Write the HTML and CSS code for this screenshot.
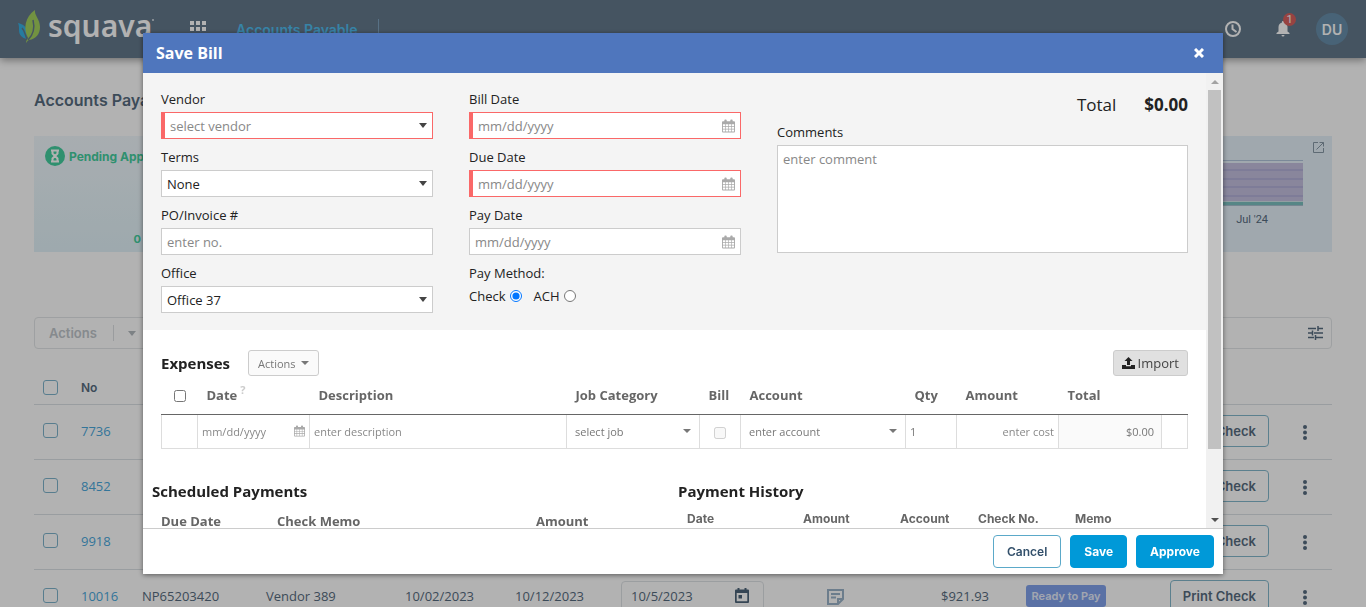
FILE: index.html
```html
<!doctype html>
<html lang="en">
    <head>
        <meta charset="UTF-8" />
        <meta name="viewport" content="width=device-width, initial-scale=1.0" />
        <title>Squava - Accounts Payable</title>
        <link rel="stylesheet" href="styles.css">
    </head>
    <body>
        <svg class="symbols" aria-hidden="true">
            <symbol id="icon-calendar" viewBox="0 0 14 14">
                <path fill-rule="evenodd" d="M1 2h1.500V1a1 1 0 0 1 1-1h.6a1 1 0 0 1 1 1v1h3.800V1a1 1 0 0 1 1-1h.6a1 1 0 0 1 1 1v1H13a1 1 0 0 1 1 1v10a1 1 0 0 1-1 1H1a1 1 0 0 1-1-1V3a1 1 0 0 1 1-1zM1 5v2h2.300V5zm3 0v2h2.700V5zm3.400 0v2H10V5zm3.300 0v2H13V5zM1 7.700v2.300h2.300V7.700zm3 0v2.300h2.700V7.700zm3.400 0v2.300H10V7.700zm3.300 0v2.300H13V7.700zM1 10.700V13h2.300v-2.300zm3 0V13h2.700v-2.300zm3.400 0V13H10v-2.300zm3.300 0V13H13v-2.300z"/>
            </symbol>
            <symbol id="icon-dots" viewBox="0 0 4 15">
                <circle cx="2" cy="2" r="2"/><circle cx="2" cy="7.500" r="2"/><circle cx="2" cy="13" r="2"/>
            </symbol>
        </svg>

        <header class="topbar">
            <a class="logo" href="#">
                <svg width="22" height="33" viewBox="0 0 22 33" aria-hidden="true">
                    <path fill="#37b0e4" d="M0 13c5 1 9 4 9 9 0 3-1 5 0 7-5-1-8-4-8-9 0-3 0-5-1-7z"/>
                    <path fill="#a4d25e" d="M17 0c-1 5 5 9 5 17 0 7-4 12-11 13-2 1-2 2-3 3 0-2 1-4 2-5-5-9-3-21 7-28z"/>
                    <path fill="none" stroke="#64798c" stroke-width="1.500" d="M10 30c5-5 7-12 5-20M4 18c3 3 3 7 5 11"/>
                </svg>
                <span class="logo-text">squava</span>
                <i class="logo-mark"></i>
            </a>
            <button class="icon-button apps" aria-label="Applications">
                <svg width="16" height="16" viewBox="0 0 16 16"><path fill="#fff" d="M0 0h4v4H0zM6 0h4v4H6zM12 0h4v4h-4zM0 6h4v4H0zM6 6h4v4H6zM12 6h4v4h-4zM0 12h4v4H0zM6 12h4v4H6zM12 12h4v4h-4z"/></svg>
            </button>
            <nav class="nav"><a href="#">Accounts Payable</a></nav>
            <div class="topbar-right">
                <button class="icon-button" aria-label="History">
                    <svg width="18" height="18" viewBox="0 0 18 18" fill="none" stroke="#fff" stroke-width="2"><circle cx="9" cy="9" r="7"/><path d="M8.500 4.500V9l4 3"/></svg>
                </button>
                <button class="icon-button bell" aria-label="Notifications">
                    <svg width="14" height="16" viewBox="0 0 14 16" fill="#fff"><path d="M7 0a1.200 1.200 0 0 1 1.200 1.200v.6A4.500 4.500 0 0 1 11.500 6v4.500L13.500 12v1H.5v-1l2-1.500V6a4.500 4.500 0 0 1 3.300-4.200v-.6A1.200 1.200 0 0 1 7 0zM5.500 14h3a1.500 1.500 0 0 1-3 0z"/></svg>
                    <span class="bell-count">1</span>
                </button>
                <button class="avatar">DU</button>
            </div>
        </header>

        <main class="page">
            <h1 class="page-title">Accounts Payable</h1>
            <div class="summary">
                <section class="card">
                    <div class="card-title">
                        <svg width="20" height="20" viewBox="0 0 20 20" aria-hidden="true"><circle cx="10" cy="10" r="10" fill="#44cf9f"/><path fill="none" stroke="#fff" stroke-width="2" d="M6 4.500h8M6 15.500h8M7.500 5v2.500L10 10l-2.500 2.500V15M12.500 5v2.500L10 10l2.500 2.500V15"/></svg>
                        Pending Approval
                    </div>
                    <div class="card-count">0</div>
                </section>
                <section class="card card-chart">
                    <button class="icon-button expand" aria-label="Expand chart">
                        <svg width="11" height="11" viewBox="0 0 11 11" fill="none" stroke="#8798a7"><path d="M5 .5H.5v10h10V6M6.500 .5h4v4M10.500 .5l-7 7"/></svg>
                    </button>
                    <div class="bars"></div>
                    <div class="chart-label">Jul '24</div>
                </section>
            </div>

            <div class="toolbar">
                <button class="toolbar-actions" disabled><span>Actions</span><i class="caret"></i></button>
                <button class="icon-button" aria-label="Filters">
                    <svg width="15" height="14" viewBox="0 0 15 14" stroke="#576c80" stroke-width="1.500"><path d="M0 2.500h8M10 2.500h5M10 0v5M0 7h4M6 7h9M4.500 4.500v5M0 11.500h6M8 11.500h7M7.500 9v5"/></svg>
                </button>
            </div>

            <table class="bills">
                <colgroup>
                    <col class="w-check"><col class="w-no"><col class="w-invoice"><col class="w-vendor"><col class="w-date"><col class="w-due"><col class="w-pay"><col class="w-note"><col class="w-amount"><col class="w-status"><col><col class="w-menu">
                </colgroup>
                <thead>
                    <tr><th><input type="checkbox" class="check" aria-label="Select all"></th><th colspan="11">No</th></tr>
                </thead>
                <tbody>
                    <tr>
                        <td><input type="checkbox" class="check" aria-label="Select 7736"></td>
                        <td><a href="#">7736</a></td>
                        <td colspan="8"></td>
                        <td class="right"><button class="print">Print Check</button></td>
                        <td class="center"><button class="icon-button" aria-label="More"><svg class="dots"><use href="#icon-dots"/></svg></button></td>
                    </tr>
                    <tr>
                        <td><input type="checkbox" class="check" aria-label="Select 8452"></td>
                        <td><a href="#">8452</a></td>
                        <td colspan="8"></td>
                        <td class="right"><button class="print">Print Check</button></td>
                        <td class="center"><button class="icon-button" aria-label="More"><svg class="dots"><use href="#icon-dots"/></svg></button></td>
                    </tr>
                    <tr>
                        <td><input type="checkbox" class="check" aria-label="Select 9918"></td>
                        <td><a href="#">9918</a></td>
                        <td colspan="8"></td>
                        <td class="right"><button class="print">Print Check</button></td>
                        <td class="center"><button class="icon-button" aria-label="More"><svg class="dots"><use href="#icon-dots"/></svg></button></td>
                    </tr>
                    <tr>
                        <td><input type="checkbox" class="check" aria-label="Select 10016"></td>
                        <td><a href="#">10016</a></td>
                        <td>NP65203420</td>
                        <td>Vendor 389</td>
                        <td>10/02/2023</td>
                        <td>10/12/2023</td>
                        <td>
                            <div class="pay-date">
                                <input type="text" value="10/5/2023" aria-label="Pay date">
                                <svg width="14" height="15" viewBox="0 0 14 15" fill="#4c6479"><path fill-rule="evenodd" d="M2.500 0h2v1.500h5V0h2v1.500H13a1 1 0 0 1 1 1V14a1 1 0 0 1-1 1H1a1 1 0 0 1-1-1V2.500a1 1 0 0 1 1-1h1.500zM1.700 5v8.300h10.600V5zM3.500 7h3.500v3.500H3.500z"/></svg>
                            </div>
                        </td>
                        <td class="center"><button class="icon-button" aria-label="Notes"><svg width="17" height="16" viewBox="0 0 17 16" fill="none" stroke="#9bb3c9" stroke-width="2"><path d="M11 15H1V1h15v9zM11 15v-5h5M4 5h9M4 8.500h5"/></svg></button></td>
                        <td class="right">$921.93</td>
                        <td class="center"><span class="status">Ready to Pay</span></td>
                        <td class="right"><button class="print">Print Check</button></td>
                        <td class="center"><button class="icon-button" aria-label="More"><svg class="dots"><use href="#icon-dots"/></svg></button></td>
                    </tr>
                </tbody>
            </table>
        </main>

        <div class="overlay">
            <div class="modal" role="dialog" aria-labelledby="modal-title">
                <div class="modal-header">
                    <h2 id="modal-title">Save Bill</h2>
                    <button class="icon-button" aria-label="Close">
                        <svg width="10" height="10" viewBox="0 0 10 10" stroke="#fff" stroke-width="3"><path d="M1 1l8 8M9 1L1 9"/></svg>
                    </button>
                </div>
                <div class="modal-body">
                    <div class="modal-content">
                        <form class="bill-form">
                            <div class="form-column">
                                <div class="field">
                                    <label for="vendor">Vendor</label>
                                    <div class="control select required"><select id="vendor" class="placeholder"><option>select vendor</option></select><i class="caret"></i></div>
                                </div>
                                <div class="field">
                                    <label for="terms">Terms</label>
                                    <div class="control select"><select id="terms"><option>None</option></select><i class="caret"></i></div>
                                </div>
                                <div class="field">
                                    <label for="invoice">PO/Invoice #</label>
                                    <div class="control"><input type="text" id="invoice" placeholder="enter no."></div>
                                </div>
                                <div class="field">
                                    <label for="office">Office</label>
                                    <div class="control select"><select id="office"><option>Office 37</option></select><i class="caret"></i></div>
                                </div>
                            </div>
                            <div class="form-column">
                                <div class="field">
                                    <label for="bill-date">Bill Date</label>
                                    <div class="control required"><input type="text" id="bill-date" placeholder="mm/dd/yyyy"><svg class="calendar"><use href="#icon-calendar"/></svg></div>
                                </div>
                                <div class="field">
                                    <label for="due-date">Due Date</label>
                                    <div class="control required"><input type="text" id="due-date" placeholder="mm/dd/yyyy"><svg class="calendar"><use href="#icon-calendar"/></svg></div>
                                </div>
                                <div class="field">
                                    <label for="pay-date">Pay Date</label>
                                    <div class="control"><input type="text" id="pay-date" placeholder="mm/dd/yyyy"><svg class="calendar"><use href="#icon-calendar"/></svg></div>
                                </div>
                                <div class="field" role="radiogroup" aria-labelledby="pay-method">
                                    <span id="pay-method">Pay Method:</span>
                                    <div class="radios">
                                        <label for="check">Check</label><input type="radio" id="check" name="method" checked>
                                        <label for="ach">ACH</label><input type="radio" id="ach" name="method">
                                    </div>
                                </div>
                            </div>
                            <div class="form-column">
                                <div class="total"><span>Total</span><strong>$0.00</strong></div>
                                <div class="field">
                                    <label for="comments">Comments</label>
                                    <textarea id="comments" placeholder="enter comment"></textarea>
                                </div>
                            </div>
                        </form>

                        <section class="expenses">
                            <div class="expenses-bar">
                                <h3>Expenses</h3>
                                <button class="small-button">Actions <i class="caret"></i></button>
                                <button class="small-button import">
                                    <svg width="13" height="12" viewBox="0 0 13 12" aria-hidden="true"><path fill="#222" d="M6.500 0L10.500 4H8v4H5V4H2.500zM0 8h4v1.200h5V8h4v4H0z"/></svg>
                                    Import
                                </button>
                            </div>
                            <table class="expense-table">
                                <colgroup>
                                    <col class="e-check"><col class="e-date"><col><col class="e-job"><col class="e-bill"><col class="e-account"><col class="e-qty"><col class="e-amount"><col class="e-total"><col class="e-end">
                                </colgroup>
                                <thead>
                                    <tr>
                                        <th class="center"><input type="checkbox" aria-label="Select all expenses"></th>
                                        <th>Date<sup>?</sup></th>
                                        <th>Description</th>
                                        <th>Job Category</th>
                                        <th>Bill</th>
                                        <th>Account</th>
                                        <th>Qty</th>
                                        <th>Amount</th>
                                        <th>Total</th>
                                        <th></th>
                                    </tr>
                                </thead>
                                <tbody>
                                    <tr>
                                        <td></td>
                                        <td><div class="cell"><input type="text" placeholder="mm/dd/yyyy" aria-label="Date"><svg class="calendar"><use href="#icon-calendar"/></svg></div></td>
                                        <td><div class="cell"><input type="text" placeholder="enter description" aria-label="Description"></div></td>
                                        <td><div class="cell cell-select"><select aria-label="Job category"><option>select job</option></select><i class="caret"></i></div></td>
                                        <td class="center"><input type="checkbox" aria-label="Bill" disabled></td>
                                        <td><div class="cell cell-select"><select aria-label="Account"><option>enter account</option></select><i class="caret"></i></div></td>
                                        <td><div class="cell"><input type="text" value="1" aria-label="Quantity"></div></td>
                                        <td><div class="cell"><input type="text" class="number" placeholder="enter cost" aria-label="Amount"></div></td>
                                        <td class="row-total">$0.00</td>
                                        <td></td>
                                    </tr>
                                </tbody>
                            </table>
                        </section>

                        <div class="payments">
                            <section>
                                <h3>Scheduled Payments</h3>
                                <table class="scheduled">
                                    <tr><th class="s-date">Due Date</th><th>Check Memo</th><th class="s-amount">Amount</th></tr>
                                </table>
                            </section>
                            <section>
                                <h3>Payment History</h3>
                                <table class="history">
                                    <tr><th class="h-date">Date</th><th class="h-amount">Amount</th><th class="h-account">Account</th><th class="h-check">Check No.</th><th>Memo</th></tr>
                                </table>
                            </section>
                        </div>
                    </div>
                    <div class="scrollbar" aria-hidden="true">
                        <i class="arrow arrow-up"></i>
                        <i class="thumb"></i>
                        <i class="arrow arrow-down"></i>
                    </div>
                </div>
                <div class="modal-footer">
                    <button class="button">Cancel</button>
                    <button class="button primary">Save</button>
                    <button class="button primary">Approve</button>
                </div>
            </div>
        </div>
    </body>
</html>
```

FILE: styles.css
```css
* {
    box-sizing: border-box;
}
body {
    margin: 0;
    height: 100vh;
    overflow: hidden;
    font-family: "Open Sans", sans-serif;
    font-size: 13px;
    color: #222;
    background: #fff;
}
h1,
h2,
h3 {
    margin: 0;
}
a {
    text-decoration: none;
}
button,
input,
select,
textarea {
    font: inherit;
    color: inherit;
}
button {
    cursor: pointer;
}
table {
    border-collapse: collapse;
    table-layout: fixed;
    width: 100%;
}
th {
    text-align: left;
}
.symbols {
    position: absolute;
    width: 0;
    height: 0;
}
.icon-button {
    display: inline-flex;
    padding: 0;
    border: none;
    background: none;
}
.center {
    text-align: center;
}
.right {
    text-align: right;
}
.caret {
    width: 0;
    height: 0;
    border: 4px solid transparent;
    border-top: 5px solid #444;
    border-bottom: none;
    pointer-events: none;
}

/* top bar */
.topbar {
    display: flex;
    align-items: center;
    height: 58px;
    padding: 0 18px;
    background: #64798c;
    box-shadow: 0 2px 8px rgba(0, 0, 0, 0.4);
}
.logo {
    display: flex;
    align-items: center;
    width: 172px;
    padding-bottom: 6px;
    color: #fff;
}
.logo-text {
    margin-left: 8px;
    font-family: "Noto Sans", sans-serif;
    font-size: 30px;
    font-weight: 600;
    line-height: 32px;
}
.logo-mark {
    align-self: flex-start;
    width: 2px;
    height: 2px;
    margin-top: 9px;
    border-radius: 50%;
    background: #dce3e8;
}
.nav {
    margin-left: 30px;
    padding: 2px 20px 0 0;
    border-right: 1px solid #7fa3bf;
    font-family: Inter, sans-serif;
    font-size: 14px;
    font-weight: 600;
    line-height: 18px;
}
.nav a {
    color: #4fbdf0;
}
.topbar-right {
    display: flex;
    align-items: center;
    gap: 26px;
    margin-left: auto;
}
.bell {
    position: relative;
    margin-left: 8px;
}
.bell-count {
    position: absolute;
    top: -8px;
    left: 7px;
    width: 13px;
    height: 13px;
    border-radius: 50%;
    background: #d9605e;
    color: #fff;
    font-family: Roboto, sans-serif;
    font-size: 11px;
    line-height: 13px;
}
.avatar {
    width: 32px;
    height: 32px;
    padding: 0;
    border: none;
    border-radius: 50%;
    background: #678fab;
    color: #fff;
    font-family: Inter, sans-serif;
    font-size: 14px;
    font-weight: 600;
}

/* page behind the dialog */
.page {
    padding: 32px 34px 0;
    color: #576c80;
}
.page-title {
    margin-bottom: 25px;
    font-family: Inter, sans-serif;
    font-size: 16px;
    font-weight: 600;
    line-height: 21px;
}
.summary {
    display: grid;
    grid-template-columns: 1fr 1fr;
    height: 116px;
    margin-bottom: 65px;
}
.card {
    padding: 10px 11px 0;
    background: linear-gradient(#f1f8fd, #e2f3f9);
    font-family: Inter, sans-serif;
}
.card-title {
    display: flex;
    align-items: center;
    gap: 4px;
    color: #44cf9f;
    font-size: 12px;
    font-weight: 700;
}
.card-count {
    width: 96px;
    margin-top: 66px;
    color: #44cf9f;
    font-size: 11px;
    font-weight: 700;
    text-align: right;
}
.card-chart {
    display: flex;
    flex-direction: column;
    padding: 6px 8px;
    background: #e5f1fa;
}
.expand {
    align-self: flex-end;
}
.bars {
    height: 46px;
    margin: 7px 21px 7px 0;
    border-top: 1px solid #b0c4dc;
    border-bottom: 1px solid #a8c0d0;
    background: linear-gradient(#e5f1fa 2px, #c4c0e0 2px 8px, #b5b2da 8px 10px, #c4c0e0 10px 17px, #b5b2da 17px 19px, #c4c0e0 19px 25px, #b5b2da 25px 27px, #c4c0e0 27px 34px, #b5b2da 34px 36px, #c4c0e0 36px 40px, #d0e4e8 40px 41px, #7cc0c0 41px);
}
.chart-label {
    padding-right: 56px;
    font-family: Roboto, sans-serif;
    font-size: 11px;
    line-height: 14px;
    text-align: right;
}
.toolbar {
    display: flex;
    align-items: center;
    justify-content: space-between;
    height: 32px;
    padding-right: 8px;
    margin-bottom: 22px;
    border: 1px solid #e3e6e8;
    border-radius: 4px;
}
.toolbar-actions {
    display: flex;
    align-items: center;
    gap: 14px;
    padding: 0 14px;
    border: none;
    background: none;
    color: #c0c6cb;
    font-family: Inter, sans-serif;
    font-size: 13px;
    font-weight: 600;
}
.toolbar-actions span {
    padding-right: 16px;
    border-right: 1px solid #dde0e3;
}
.toolbar-actions .caret {
    border-top-color: #b4babf;
}
.bills td,
.bills th {
    height: 55px;
    padding: 0 9px;
    border-bottom: 1px solid #dce1e5;
}
.bills th {
    height: 33px;
    font-family: Inter, sans-serif;
    font-size: 12px;
    font-weight: 600;
}
.bills td {
    padding-bottom: 2px;
}
.bills a {
    color: #4aa8dc;
}
.bills .icon-button {
    vertical-align: middle;
}
.w-check {
    width: 38px;
}
.w-no {
    width: 61px;
}
.w-invoice,
.w-note {
    width: 124px;
}
.w-vendor {
    width: 139px;
}
.w-date {
    width: 110px;
}
.w-due {
    width: 106px;
}
.w-pay {
    width: 161px;
}
.w-amount {
    width: 101px;
}
.w-status {
    width: 136px;
}
.w-menu {
    width: 54px;
}
.check {
    appearance: none;
    display: block;
    width: 15px;
    height: 15px;
    margin: 0;
    border: 1px solid #7fb4cc;
    border-radius: 3px;
}
.print {
    height: 32px;
    padding: 0 12px;
    border: 1px solid #83b8cc;
    border-radius: 4px;
    background: none;
    font-family: Inter, sans-serif;
    font-weight: 600;
}
.dots {
    width: 4px;
    height: 15px;
    fill: #576c80;
}
.pay-date {
    display: flex;
    align-items: center;
    height: 30px;
    padding: 0 14px 0 9px;
    border: 1px solid #dfe3e6;
    border-radius: 4px;
}
.pay-date input {
    flex: 1;
    min-width: 0;
    padding: 0;
    border: none;
    background: none;
}
.status {
    display: inline-block;
    padding: 0 5px;
    border-radius: 3px;
    background: #82a3ec;
    color: #e8eefc;
    font-family: Inter, sans-serif;
    font-size: 11px;
    font-weight: 600;
    line-height: 22px;
}

/* dialog */
.overlay {
    position: fixed;
    inset: 0;
    display: flex;
    justify-content: center;
    padding: 33px 0;
    background: rgba(0, 0, 0, 0.3);
}
.modal {
    display: flex;
    flex-direction: column;
    width: 80%;
    max-width: 1080px;
    background: #fff;
    box-shadow: 0 1px 5px rgba(0, 0, 0, 0.5);
}
.modal-header {
    display: flex;
    align-items: center;
    justify-content: space-between;
    height: 40px;
    padding: 0 19px 0 13px;
    background: #4f76bd;
    color: #fff;
}
.modal-header h2 {
    font-size: 16px;
}
.modal-body {
    display: flex;
    flex: 1;
    min-height: 0;
}
.modal-content {
    flex: 1;
    overflow: hidden;
}
.bill-form {
    display: grid;
    grid-template-columns: 272px 272px 1fr;
    gap: 36px;
    padding: 16px 18px 17px;
    background: #f4f4f4;
}
.form-column {
    display: flex;
    flex-direction: column;
    gap: 8px;
}
.field {
    display: flex;
    flex-direction: column;
    gap: 3px;
    line-height: 20px;
}
.control {
    display: flex;
    align-items: center;
    height: 27px;
    padding-right: 5px;
    border: 1px solid #ccc;
    background: #fff;
}
.required {
    border-color: #fa6868;
    border-left-width: 4px;
}
.control input,
.control select {
    flex: 1;
    align-self: stretch;
    min-width: 0;
    padding: 0 5px;
    border: none;
    background: none;
}
select {
    appearance: none;
}
.placeholder {
    color: #888;
}
::placeholder {
    color: #888;
    opacity: 1;
}
.calendar {
    width: 13px;
    height: 14px;
    fill: #aaa;
}
.radios {
    display: flex;
    align-items: center;
}
.radios input {
    width: 12px;
    height: 12px;
    margin: 0 12px 0 4px;
}
.total {
    display: flex;
    align-items: center;
    justify-content: flex-end;
    gap: 28px;
    height: 30px;
    margin-bottom: -5px;
    font-size: 17px;
}
textarea {
    height: 108px;
    padding: 4px 5px;
    border: 1px solid #ccc;
    line-height: 18px;
    resize: none;
}
.expenses {
    padding: 20px 18px 0;
}
h3 {
    font-size: 15px;
}
.expenses-bar {
    display: flex;
    align-items: center;
    gap: 18px;
}
.small-button {
    display: flex;
    align-items: center;
    gap: 5px;
    height: 26px;
    padding: 0 9px;
    border: 1px solid #ccc;
    border-radius: 3px;
    background: #fafafa;
    color: #777;
    font-size: 11px;
}
.small-button .caret {
    border-top-width: 4px;
    border-top-color: #777;
}
.import {
    gap: 3px;
    padding: 0 8px;
    margin-left: auto;
    background: #e0e0e0;
    color: #444;
    font-size: 13px;
}
.expense-table th {
    height: 38px;
    padding: 0 9px;
    border-bottom: 1px solid #666;
    color: #666;
    white-space: nowrap;
}
.expense-table sup {
    margin-left: 3px;
    color: #ccc;
    font-size: 11px;
    line-height: 0;
}
.expense-table td {
    height: 34px;
    padding: 0;
    border: 1px solid #ddd;
    border-top-color: #666;
    color: #777;
    font-size: 11px;
}
.expense-table th.center {
    padding: 0;
}
.expense-table input[type="checkbox"] {
    width: 12px;
    height: 12px;
    margin: 0;
    vertical-align: middle;
}
.e-check {
    width: 36px;
}
.e-date {
    width: 112px;
}
.e-job {
    width: 133px;
}
.e-bill {
    width: 41px;
}
.e-account {
    width: 165px;
}
.e-qty {
    width: 51px;
}
.e-amount {
    width: 102px;
}
.e-total {
    width: 103px;
}
.e-end {
    width: 26px;
}
.cell {
    display: flex;
    align-items: center;
    padding: 0 4px;
}
.cell input,
.cell select {
    flex: 1;
    min-width: 0;
    padding: 0;
    border: none;
    background: none;
}
.cell-select {
    padding: 0 8px;
}
.cell .caret {
    border-top-width: 4px;
    border-top-color: #777;
}
.cell .calendar {
    width: 11px;
    height: 12px;
}
.number {
    text-align: right;
}
.expense-table .row-total {
    padding-right: 7px;
    background: #fafafa;
    text-align: right;
}
.payments {
    display: grid;
    grid-template-columns: 526px 1fr;
    padding: 31px 9px 0;
}
.payments h3 {
    line-height: 22px;
}
.payments th {
    padding: 0 0 0 9px;
    color: #666;
    line-height: 18px;
}
.scheduled {
    margin-top: 10px;
}
.s-date {
    width: 116px;
}
.s-amount {
    width: 151px;
}
.history {
    margin-top: 8px;
    font-family: Inter, sans-serif;
    font-size: 12px;
}
.h-date {
    width: 116px;
}
.h-amount {
    width: 97px;
}
.h-account {
    width: 78px;
}
.h-check {
    width: 97px;
}
.scrollbar {
    display: flex;
    flex-direction: column;
    align-items: center;
    width: 17px;
    background: #f1f1f1;
}
.arrow {
    width: 0;
    height: 0;
    margin: 7px 0 6px;
    border: 4px solid transparent;
}
.arrow-up {
    border-top: none;
    border-bottom-color: #a3a3a3;
}
.arrow-down {
    margin-top: auto;
    border-top-color: #505050;
    border-bottom: none;
}
.thumb {
    width: 13px;
    height: 79%;
    background: #c1c1c1;
}
.modal-footer {
    display: flex;
    align-items: center;
    justify-content: flex-end;
    gap: 9px;
    height: 46px;
    padding: 0 9px;
    border-top: 1px solid #ccc;
}
.button {
    height: 33px;
    padding: 0 13px;
    border: 1px solid #5ba9c9;
    border-radius: 4px;
    background: #fff;
    color: #33506b;
    font-family: Inter, sans-serif;
    font-size: 12px;
    font-weight: 600;
}
.primary {
    border-color: #0099d8;
    background: #0099d8;
    color: #fff;
    font-weight: 700;
}
```
